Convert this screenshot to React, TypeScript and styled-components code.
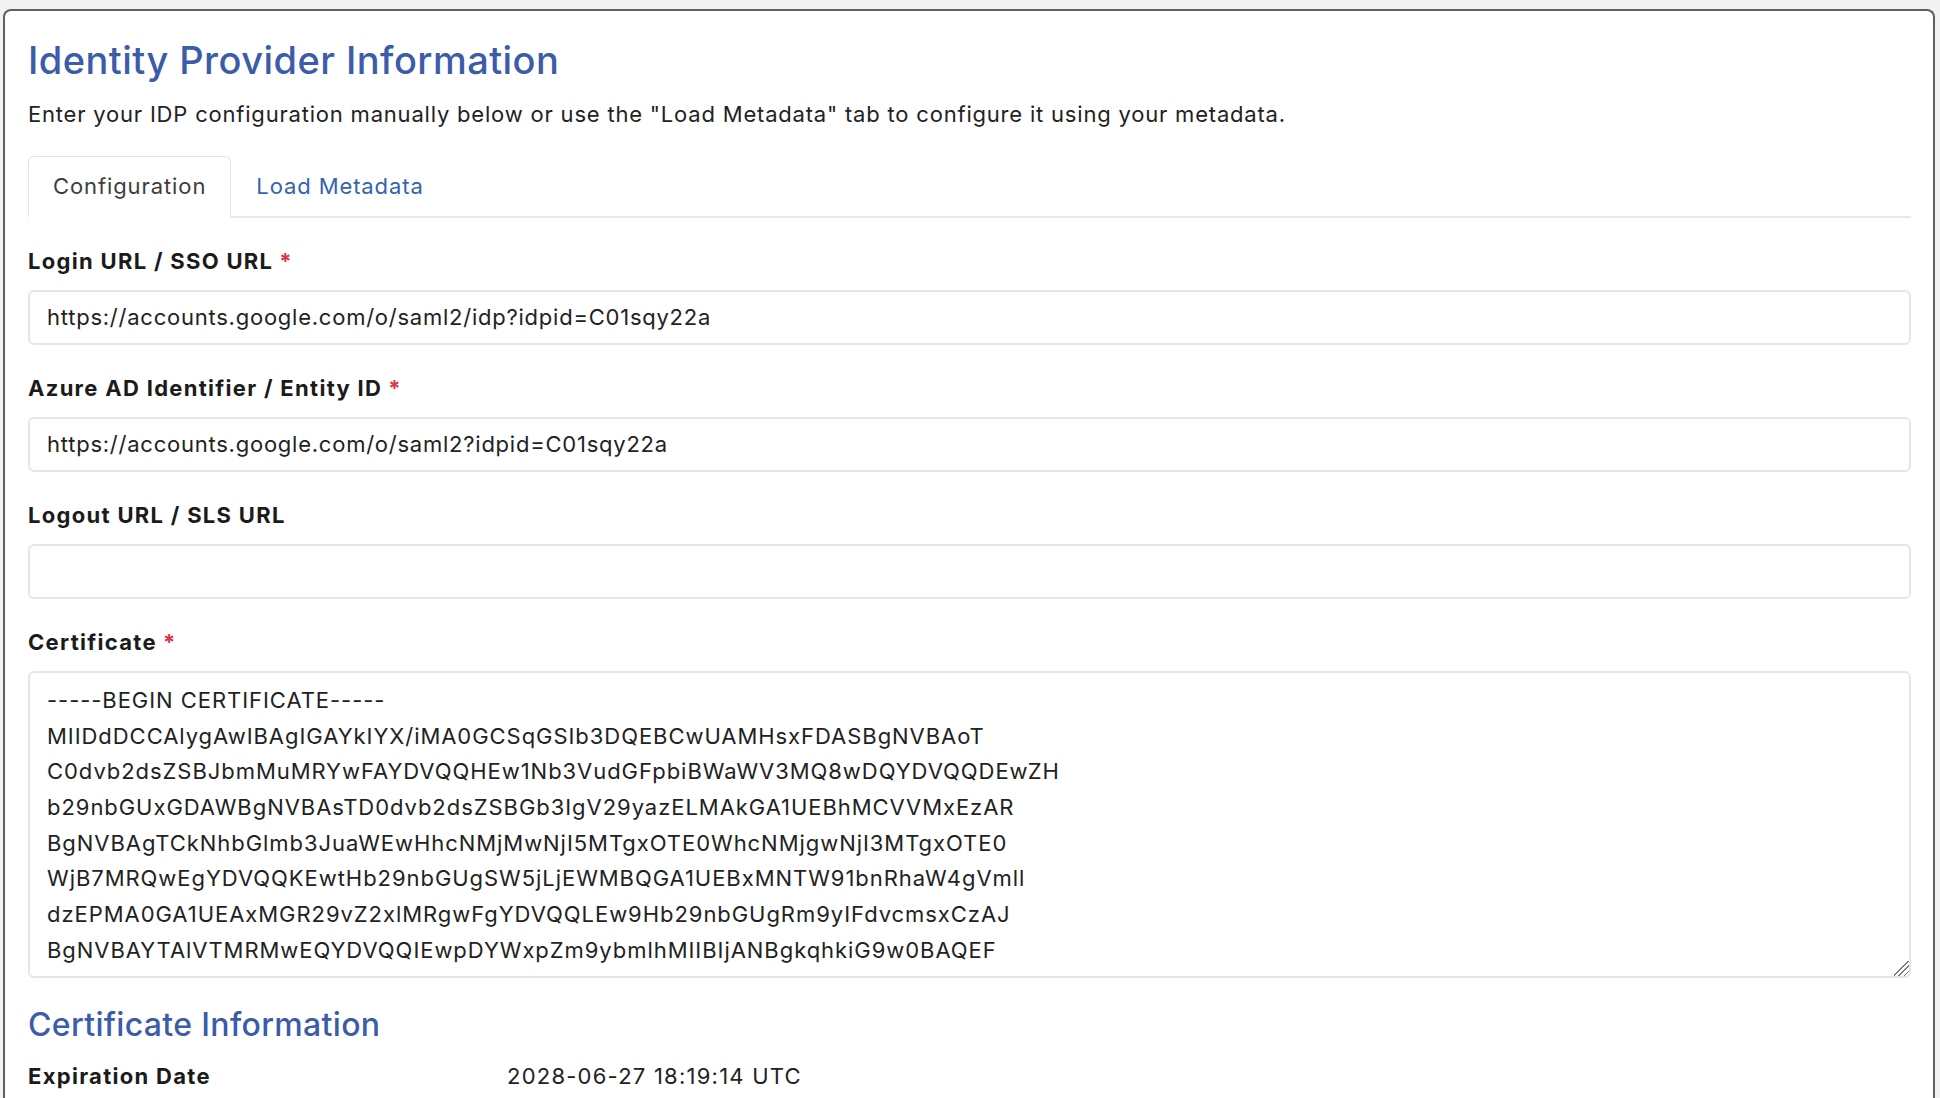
import React from "react";
import styled, { createGlobalStyle } from "styled-components";

const GlobalStyle = createGlobalStyle`
  html, body {
    margin: 0;
    padding: 0;
    background: #f2f2f2;
  }
  body {
    font-family: Inter, "Liberation Sans", Arial, sans-serif;
    color: #212529;
  }
  * { box-sizing: border-box; }
`;

const Page = styled.div`
  padding: 9px 5px 0 3px;
  height: 1098px;
  overflow: hidden;
`;

const Card = styled.section`
  background: #ffffff;
  border: 2px solid #5f5f5f;
  border-bottom: none;
  border-radius: 8px 8px 0 0;
  padding: 27px 22px 60px 23px;
  min-height: 1200px;
`;

const Title = styled.h1<{ $size?: number; $track?: number }>`
  margin: 0;
  font-size: ${(p) => p.$size ?? 38}px;
  line-height: 1.21;
  font-weight: 500;
  color: #3b5ca9;
  letter-spacing: ${(p) => p.$track ?? 0.45}px;
`;

const Lead = styled.p`
  margin: 14px 0 0;
  font-size: 22px;
  line-height: 33px;
  letter-spacing: 0.8px;
  color: #222;
`;

const TabBar = styled.div`
  display: flex;
  margin-top: 25px;
  border-bottom: 2px solid #e8e8e8;
`;

const Tab = styled.button<{ $active?: boolean }>`
  appearance: none;
  font-family: inherit;
  font-size: 22px;
  letter-spacing: 0.9px;
  height: 62px;
  padding: 0 24px;
  margin-bottom: -2px;
  background: ${(p) => (p.$active ? "#fff" : "transparent")};
  color: ${(p) => (p.$active ? "#3d3d3d" : "#3563b0")};
  border: 1px solid ${(p) => (p.$active ? "#e3e3e3" : "transparent")};
  border-bottom: 2px solid ${(p) => (p.$active ? "#fff" : "transparent")};
  border-radius: 6px 6px 0 0;
  cursor: pointer;
`;

const Field = styled.div`
  display: flex;
  flex-direction: column;
  gap: 13px;
  margin-top: 28px;
`;

const Label = styled.label`
  font-size: 22px;
  line-height: 31px;
  font-weight: 700;
  letter-spacing: 1.3px;
  color: #1b1b1b;
`;

const Required = styled.span`
  color: #dc3545;
  margin-left: 6px;
`;

const Input = styled.input`
  width: 100%;
  height: 55px;
  padding: 0 17px;
  border: 2px solid #e6e6e6;
  border-radius: 6px;
  font-family: inherit;
  font-size: 22px;
  letter-spacing: 0.76px;
  color: #222;
  background: #fff;
  outline: none;
`;

const TextArea = styled.textarea`
  width: 100%;
  height: 307px;
  padding: 10px 17px;
  border: 2px solid #e6e6e6;
  border-radius: 6px;
  font-family: inherit;
  font-size: 22px;
  letter-spacing: 0.95px;
  line-height: 35.7px;
  color: #222;
  background: #fff;
  resize: vertical;
  overflow: hidden;
  white-space: pre;
  outline: none;

  &::-webkit-resizer {
    background: linear-gradient(
      135deg,
      transparent 0 46%,
      #7a7a7a 46% 52%,
      transparent 52% 63%,
      #7a7a7a 63% 69%,
      transparent 69% 80%,
      #7a7a7a 80% 86%,
      transparent 86%
    );
  }
`;

const InfoTitle = styled(Title)`
  margin-top: 28px;
  line-height: 1.2;
`;

const InfoGrid = styled.dl`
  display: grid;
  grid-template-columns: 479px 1fr;
  margin: 17px 0 0;
  font-size: 22px;
  line-height: 31px;
`;

const InfoKey = styled.dt`
  font-weight: 700;
  letter-spacing: 1.3px;
  color: #1b1b1b;
`;

const InfoValue = styled.dd`
  margin: 0;
  letter-spacing: 1.23px;
  color: #222;
`;

const certificate = [
  "-----BEGIN CERTIFICATE-----",
  "MIIDdDCCAlygAwIBAgIGAYkIYX/iMA0GCSqGSIb3DQEBCwUAMHsxFDASBgNVBAoT",
  "C0dvb2dsZSBJbmMuMRYwFAYDVQQHEw1Nb3VudGFpbiBWaWV3MQ8wDQYDVQQDEwZH",
  "b29nbGUxGDAWBgNVBAsTD0dvb2dsZSBGb3IgV29yazELMAkGA1UEBhMCVVMxEzAR",
  "BgNVBAgTCkNhbGlmb3JuaWEwHhcNMjMwNjI5MTgxOTE0WhcNMjgwNjI3MTgxOTE0",
  "WjB7MRQwEgYDVQQKEwtHb29nbGUgSW5jLjEWMBQGA1UEBxMNTW91bnRhaW4gVmll",
  "dzEPMA0GA1UEAxMGR29vZ2xlMRgwFgYDVQQLEw9Hb29nbGUgRm9yIFdvcmsxCzAJ",
  "BgNVBAYTAlVTMRMwEQYDVQQIEwpDYWxpZm9ybmlhMIIBIjANBgkqhkiG9w0BAQEF",
  "AAOCAQ8AMIIBCgKCAQEAu8kZ3m1vQm0pX2Jr9yq6c4Yw1tF8nV0aL5sR7dE2hK3o",
  "-----END CERTIFICATE-----",
].join("\n");

export default function App() {
  return (
    <>
      <GlobalStyle />
      <Page>
        <Card>
          <Title>Identity Provider Information</Title>
          <Lead>
            Enter your IDP configuration manually below or use the "Load Metadata" tab to configure it using your metadata.
          </Lead>
          <TabBar>
            <Tab $active>Configuration</Tab>
            <Tab>Load Metadata</Tab>
          </TabBar>

          <Field>
            <Label>
              Login URL / SSO URL<Required>*</Required>
            </Label>
            <Input readOnly value="https://accounts.google.com/o/saml2/idp?idpid=C01sqy22a" />
          </Field>

          <Field>
            <Label>
              Azure AD Identifier / Entity ID<Required>*</Required>
            </Label>
            <Input readOnly value="https://accounts.google.com/o/saml2?idpid=C01sqy22a" />
          </Field>

          <Field>
            <Label>Logout URL / SLS URL</Label>
            <Input readOnly value="" />
          </Field>

          <Field>
            <Label>
              Certificate<Required>*</Required>
            </Label>
            <TextArea readOnly value={certificate} />
          </Field>

          <InfoTitle as="h2" $size={32} $track={0.33}>Certificate Information</InfoTitle>
          <InfoGrid>
            <InfoKey>Expiration Date</InfoKey>
            <InfoValue>2028-06-27 18:19:14 UTC</InfoValue>
          </InfoGrid>
        </Card>
      </Page>
    </>
  );
}
